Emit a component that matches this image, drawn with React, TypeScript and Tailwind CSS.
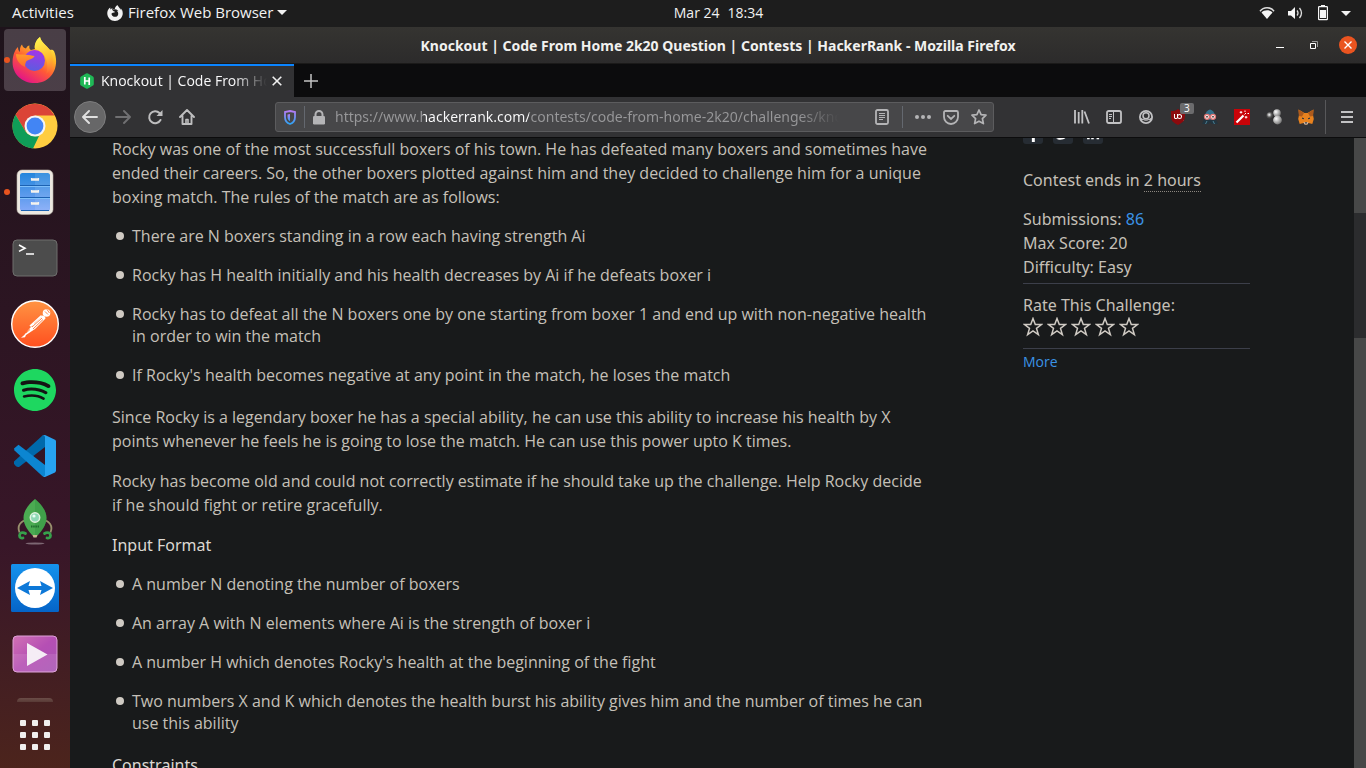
import type { ReactNode } from "react";
import { SiFirefoxbrowser, SiUblockorigin, SiSpotify } from "react-icons/si";
import { FaFacebookF, FaTwitter, FaLinkedinIn } from "react-icons/fa";

function FirefoxLogo() {
  return (
    <svg viewBox="0 0 46 46" className="size-[46px]" aria-hidden="true">
      <defs>
        <linearGradient id="ffBody" x1="0.8" y1="0.05" x2="0.25" y2="0.95">
          <stop offset="0" stopColor="#fff44f" />
          <stop offset="0.3" stopColor="#ffb625" />
          <stop offset="0.6" stopColor="#ff5a36" />
          <stop offset="1" stopColor="#e31587" />
        </linearGradient>
        <linearGradient id="ffGlobe" x1="0.6" y1="0" x2="0.4" y2="1">
          <stop offset="0" stopColor="#a435e8" />
          <stop offset="1" stopColor="#5c5ce0" />
        </linearGradient>
        <linearGradient id="ffTail" x1="0.4" y1="0" x2="0.6" y2="1">
          <stop offset="0" stopColor="#fff44f" />
          <stop offset="0.6" stopColor="#ffbd2e" />
          <stop offset="1" stopColor="#ff7139" stopOpacity="0.4" />
        </linearGradient>
        <linearGradient id="ffFace" x1="0" y1="0" x2="0" y2="1">
          <stop offset="0" stopColor="#ff9a2a" />
          <stop offset="1" stopColor="#ff6a2e" />
        </linearGradient>
      </defs>
      <path fill="url(#ffBody)" d="M8 15C7.500 12 8.500 9 10 7.500C10.500 10 12 11 14 11.500C15 9.500 16 8.700 17.500 8.500C17 10.500 17.500 12 19 13L23 12C22 8 24 3 28 0C29 5 34 8 38 13C40 12.500 41 13 42 14C48 28 41 46 23 46C9 46 0 36 .6 24C.8 19 2.500 13 6 10C6 12 6.500 14 8 15Z" />
      <path fill="url(#ffTail)" d="M28 0C29 5 34 8 38 13C42 20 42 32 34 37C37 30 35 20 30 16C27 13 23 12 23 12C22 8 24 3 28 0Z" />
      <circle cx="22.500" cy="23.500" r="10.500" fill="url(#ffGlobe)" />
      <path fill="url(#ffFace)" d="M4 17C9 17.500 18 18 22.500 19C21.500 22 17 22.500 14.500 24C13 26 13 29 13 30C8 28 4 23 4 17Z" />
    </svg>
  );
}

function ChromeLogo() {
  return (
    <svg viewBox="0 0 46 46" className="size-[46px]" aria-hidden="true">
      <circle cx="23" cy="23" r="22.500" fill="#ffcd40" />
      <path fill="#db4437" d="M3.500 11.750A22.500 22.500 0 0 1 42.500 12.500H23L13.500 28.500Z" />
      <path fill="#0f9d58" d="M3.500 11.750L13.500 28.500C16 32 20 34 27 33L21 45.500A22.500 22.500 0 0 1 3.500 11.750Z" />
      <circle cx="23" cy="23" r="10.500" fill="#f4f4f4" />
      <circle cx="23" cy="23" r="8.400" fill="#4285f4" />
    </svg>
  );
}

function FilesLogo() {
  return (
    <svg viewBox="0 0 38 46" className="h-[46px] w-[38px]" aria-hidden="true">
      <defs>
        <linearGradient id="drawer" x1="0" y1="0" x2="0" y2="1">
          <stop offset="0" stopColor="#2486dc" />
          <stop offset="1" stopColor="#83a9f8" />
        </linearGradient>
      </defs>
      <rect x="1" y="1" width="36" height="44.500" rx="5" fill="#ece8e1" stroke="#b9b2a8" strokeWidth=".6" />
      <rect x="4" y="4" width="30" height="38" rx="2.500" fill="url(#drawer)" />
      <path fill="#fff" fillOpacity=".1" d="M19 4h12.500a2.500 2.500 0 0 1 2.500 2.500v33a2.500 2.500 0 0 1-2.500 2.500H19z" />
      <path stroke="#1c62b2" d="M4 16.500h30M4 28.500h30M5 41.500h28" />
      <path stroke="#7fc0fb" d="M4 17.500h30M4 29.500h30" />
      <path stroke="#f6f3ee" strokeWidth="2.600" d="M15 10.500h8M15 22.500h8M15 34.500h8" />
      <path stroke="#f6f3ee" strokeWidth="1.200" d="M15.500 9v2M22.500 9v2M15.500 21v2M22.500 21v2M15.500 33v2M22.500 33v2" />
    </svg>
  );
}

function TerminalLogo() {
  return (
    <svg viewBox="0 0 46 38" className="h-[38px] w-[46px]" aria-hidden="true">
      <rect x="1" y="1" width="44" height="36" rx="4" fill="#4c4c4c" stroke="#6e6e6c" />
      <path fill="none" stroke="#fff" strokeWidth="1.600" d="M7 6l6 3.200L7 12.400M14 15h8" />
    </svg>
  );
}

function PostmanLogo() {
  return (
    <svg viewBox="0 0 48 48" className="size-[48px]" aria-hidden="true">
      <defs>
        <linearGradient id="pm" x1="0" y1="0" x2="0" y2="1">
          <stop offset="0" stopColor="#ff9443" />
          <stop offset="1" stopColor="#ff4f1f" />
        </linearGradient>
      </defs>
      <circle cx="24" cy="24" r="23.300" fill="url(#pm)" stroke="#fff" strokeWidth="1.400" />
      <circle cx="35.500" cy="13" r="3.800" fill="#fff" />
      <path stroke="#ff7a38" strokeWidth=".9" fill="none" d="M34 11.500l3 3M36 9.500l2.500 3.500" />
      <path fill="#fff" d="M31 15.500c2 0 3.500 1 3.500 3L24 29l-9 6-1 2.200-4 .6 3-2.600L19 28z" />
      <path stroke="#fff" strokeWidth="1.500" strokeLinecap="round" fill="none" d="M30 16l-11 10 4-2" />
      <path stroke="#ff7332" strokeWidth=".9" d="M21 27l10-9M22 29l10-9.500M15 33l4-3.500" />
    </svg>
  );
}

function VsCodeLogo() {
  return (
    <svg viewBox="0 0 42 42" className="size-[42px]" aria-hidden="true">
      <path fill="#0069ab" d="M0 28.500v-2L28.500.5 31 0v12L5 32c-2 .5-4-1-5-3.500z" />
      <path fill="#0c86d1" d="M0 13.500l4.500-3.700L31 30v12l-2.500-.8L.5 15.500z" />
      <path fill="#27a3f1" d="M31 0l10 4.800c.6.300 1 1 1 1.800v29c0 .8-.4 1.500-1 1.800L31 42c-1 .2-2-.4-2.500-.8 1 .5 2.500 0 2.500-1.400V2.200C31 1 29.500 0 28.500.5z" />
    </svg>
  );
}

function RocketLogo() {
  return (
    <svg viewBox="0 0 38 46" className="h-[46px] w-[38px]" aria-hidden="true">
      <path fill="none" stroke="#98906d" strokeWidth="1.800" d="M8 21.500c-5.500 3-6.500 7-4.500 12M30 21.500c5.500 3 6.500 7 4.500 12" />
      <ellipse cx="19" cy="44.500" rx="9.500" ry=".9" fill="#fff" fillOpacity=".35" />
      <path fill="#c7b98f" d="M15.500 34h7l-2 4.500h-3z" />
      <path fill="#4bab52" d="M19 0c5 4 11.500 11 11.500 19 0 7.500-5.500 13.500-8.500 17h-6c-3-3.500-8.500-9.500-8.500-17C7.500 11 14 4 19 0z" />
      <path fill="#2f8d3d" fillOpacity=".35" d="M19 0c5 4 11.500 11 11.500 19 0 7.500-5.500 13.500-8.500 17h-3z" />
      <circle cx="19" cy="18.500" r="4.700" fill="#8ed9b5" stroke="#e0f2df" strokeWidth="1.500" />
      <circle cx="18" cy="17" r="1.600" fill="#e8fff4" />
      <path stroke="#1f6b2d" strokeWidth="2" strokeDasharray="1.500 .7" d="M15 27.500h8" />
      <path fill="none" stroke="#36a04b" strokeWidth="2.800" strokeLinecap="round" d="M9.500 34.500c-3-2-6-.5-6 2 0 2 1.500 3 3.500 2.500M28.500 34.500c3-2 6-.5 6 2 0 2-1.500 3-3.500 2.500" />
    </svg>
  );
}

function TeamViewerLogo() {
  return (
    <svg viewBox="0 0 48 48" className="size-[48px]" aria-hidden="true">
      <defs>
        <linearGradient id="tv" x1="0" y1="0" x2="0" y2="1">
          <stop offset="0" stopColor="#1592ec" />
          <stop offset="1" stopColor="#0564c8" />
        </linearGradient>
      </defs>
      <rect width="48" height="48" rx="1.500" fill="url(#tv)" />
      <circle cx="24" cy="24" r="20" fill="#fff" />
      <path fill="#0d78d8" d="M6 24l13-7-1.500 5h13L29 17l13 7-13 7 1.500-5h-13l1.500 5z" />
    </svg>
  );
}

function VideosLogo() {
  return (
    <svg viewBox="0 0 46 38" className="h-[38px] w-[46px]" aria-hidden="true">
      <defs>
        <linearGradient id="vid" x1="0" y1="0" x2="1" y2="1">
          <stop offset="0" stopColor="#d272b4" />
          <stop offset=".5" stopColor="#b54fb4" />
          <stop offset="1" stopColor="#a855b4" />
        </linearGradient>
      </defs>
      <rect x="1" y="1" width="44" height="36" rx="4" fill="url(#vid)" stroke="#dda0d6" />
      <path fill="#fff" fillOpacity=".1" d="M1 19h44v14a4 4 0 0 1-4 4H5a4 4 0 0 1-4-4z" />
      <path fill="#f5edf5" d="M15 8l20.500 11.500L15 31z" />
    </svg>
  );
}

const dockItems: { name: string; icon: ReactNode; running?: boolean; active?: boolean }[] = [
  { name: "Firefox", icon: <FirefoxLogo />, running: true, active: true },
  { name: "Chrome", icon: <ChromeLogo /> },
  { name: "Files", icon: <FilesLogo />, running: true },
  { name: "Terminal", icon: <TerminalLogo /> },
  { name: "Postman", icon: <PostmanLogo /> },
  {
    name: "Spotify",
    icon: (
      <span className="grid size-[42px] place-items-center rounded-full bg-[#141414]">
        <SiSpotify className="size-[42px] text-[#1ed760]" />
      </span>
    ),
  },
  { name: "Visual Studio Code", icon: <VsCodeLogo /> },
  { name: "Rocket", icon: <RocketLogo /> },
  { name: "TeamViewer", icon: <TeamViewerLogo /> },
  { name: "Videos", icon: <VideosLogo /> },
];

function TopBar() {
  return (
    <header className="grid h-[27px] shrink-0 grid-cols-[1fr_auto_1fr] items-center bg-[#1d1d1d] pb-px text-sm text-[#f2f2f2]">
      <div className="flex items-center pl-3 text-[15px]">
        <button className="w-[95px] text-left">Activities</button>
        <button className="flex items-center whitespace-nowrap">
          <SiFirefoxbrowser className="mr-[5px] size-4" aria-hidden="true" />
          Firefox Web Browser
          <svg viewBox="0 0 10 5" className="ml-1 h-[5px] w-[10px]" aria-hidden="true">
            <path fill="currentColor" d="M0 0h10L5 5z" />
          </svg>
        </button>
      </div>
      <button className="flex gap-2 pl-[71px]">
        <span>Mar 24</span>
        <span>18:34</span>
      </button>
      <button aria-label="System menu" className="flex items-center justify-end pr-[15px]">
        <svg viewBox="0 0 16 14" className="h-[14px] w-4" aria-hidden="true">
          <path fill="none" stroke="#ddd" strokeWidth="1.500" d="M1 5.200C4.500.5 11.500.5 15 5.200" />
          <path fill="#f5f5f5" d="M2.500 6.500C5 3.500 11 3.500 13.500 6.500L8 13z" />
        </svg>
        <svg viewBox="0 0 16 14" className="ml-3 h-[14px] w-4" aria-hidden="true">
          <path fill="#f5f5f5" d="M1 5h3l4-4v12L4 9.500H1z" />
          <path fill="none" stroke="#ddd" strokeWidth="1.300" d="M10 4.500q2 2.500 0 5M12.500 2q4 5 0 10" />
        </svg>
        <svg viewBox="0 0 10 16" className="ml-[15px] h-4 w-[10px]" aria-hidden="true">
          <path fill="#f5f5f5" d="M3 0h4v2H3zM2 5h6v8H2z" />
          <rect x=".6" y="1.600" width="8.800" height="13" rx=".6" fill="none" stroke="#f5f5f5" strokeWidth="1.200" />
        </svg>
        <svg viewBox="0 0 10 5" className="ml-[13px] h-[5px] w-[10px]" aria-hidden="true">
          <path fill="currentColor" d="M0 0h10L5 5z" />
        </svg>
      </button>
    </header>
  );
}

function Dock() {
  return (
    <nav
      aria-label="Dock"
      className="flex w-[70px] shrink-0 flex-col items-center bg-linear-to-b from-[#1e131b] via-[#381628] via-70% to-[#4c241c]"
    >
      {dockItems.map((item) => (
        <div key={item.name} className="relative flex h-[66px] w-full shrink-0 items-center justify-center">
          {item.running && <span className="absolute top-[30px] left-1 size-[6px] rounded-full bg-[#e9541f]" />}
          <button
            aria-label={item.name}
            className={
              item.active
                ? "grid size-[62px] place-items-center rounded-[4px] bg-[#f6edf6]/20"
                : "grid size-[62px] place-items-center"
            }
          >
            {item.icon}
          </button>
        </div>
      ))}
      <div className="mt-[11px] h-1 w-9 shrink-0 rounded-t-[5px] bg-linear-to-b from-[#6b4d48] to-[#593a36]" />
      <button aria-label="Show applications" className="mt-[18px] grid shrink-0 grid-cols-3 gap-[6px]">
        {Array.from({ length: 9 }, (_, i) => (
          <span key={i} className="size-[6px] rounded-[1px] bg-[#f1efee]" />
        ))}
      </button>
    </nav>
  );
}

function TitleBar() {
  return (
    <div className="grid h-[37px] shrink-0 grid-cols-[1fr_auto_1fr] items-center border-b border-[#1b1a19] bg-linear-to-b from-[#353431] to-[#2c2b2b]">
      <span />
      <h1 className="pt-[2px] font-['Noto_Sans',sans-serif] text-sm font-bold whitespace-nowrap text-[#f1f1ef]">
        Knockout | Code From Home 2k20 Question | Contests | HackerRank - Mozilla Firefox
      </h1>
      <div className="flex items-center justify-end pr-[9px]">
        <button aria-label="Minimize" className="flex h-4 w-8 items-center">
          <span className="mt-1 h-px w-2 bg-white" />
        </button>
        <button aria-label="Restore" className="flex w-[31px] justify-start pl-[2px]">
          <svg viewBox="0 0 8 8" className="size-2" aria-hidden="true">
            <path fill="none" stroke="#fff" d="M.5 2.500h5v5h-5z" />
            <path fill="none" stroke="#999" d="M2 .5h5.500V6" />
          </svg>
        </button>
        <button aria-label="Close" className="grid size-[18px] place-items-center rounded-full bg-[#ea5420]">
          <svg viewBox="0 0 8 8" className="size-2" aria-hidden="true">
            <path stroke="#fff" strokeWidth="1.400" d="M.5.500l7 7M7.500.500l-7 7" />
          </svg>
        </button>
      </div>
    </div>
  );
}

function TabStrip() {
  return (
    <div className="flex h-[33px] shrink-0 bg-[#0c0c0d]" role="tablist">
      <div className="flex w-[224px] items-center border-t-2 border-[#0a84ff] bg-[#323234] pb-px pl-[10px]" role="tab" aria-selected="true">
        <svg viewBox="0 0 14 16" className="h-4 w-[14px] shrink-0" aria-hidden="true">
          <path fill="#1fb856" d="M7 .300Q7.500.300 8 .600L13 3.500Q13.800 4 13.800 5v6q0 1-.8 1.500L8 15.400q-1 .6-2 0L1 12.500Q.2 12 .2 11V5q0-1 .8-1.500L6 .600Q6.500.300 7 .300z" />
          <path stroke="#fff" strokeWidth="1.700" d="M4.800 4v7.500M9.200 4.500V12M4.800 8h4.400" />
        </svg>
        <span className="ml-[7px] w-[166px] overflow-hidden mask-r-from-80% text-sm whitespace-nowrap text-[#f9f9fa]">
          Knockout | Code From Home
        </span>
        <button aria-label="Close tab" className="ml-[5px]">
          <svg viewBox="0 0 10 10" className="size-[10px]" aria-hidden="true">
            <path stroke="#f0f0f0" strokeWidth="1.600" d="M.7.700l8.600 8.600M9.300.700L.7 9.300" />
          </svg>
        </button>
      </div>
      <button aria-label="New tab" className="ml-[10px]">
        <svg viewBox="0 0 14 14" className="size-[14px]" aria-hidden="true">
          <path stroke="#c4c4c4" strokeWidth="1.500" d="M7 0v14M0 7h14" />
        </svg>
      </button>
    </div>
  );
}

function UrlBar() {
  return (
    <div className="ml-20 flex h-[30px] w-[719px] shrink items-center rounded-[3px] border border-[#5c5c5e] bg-[#474749] text-[#b4b4b6]">
      <button aria-label="Tracking protection" className="ml-2">
        <svg viewBox="0 0 12 15" className="h-[15px] w-3" aria-hidden="true">
          <defs>
            <linearGradient id="shield" x1="0" y1="0" x2="0" y2="1">
              <stop offset="0" stopColor="#b57cf5" />
              <stop offset="1" stopColor="#2fa3f5" />
            </linearGradient>
          </defs>
          <path fill="none" stroke="url(#shield)" strokeWidth="1.800" d="M6 1L11 2v5c0 3.500-2 6-5 7-3-1-5-3.500-5-7V2z" />
          <path fill="url(#shield)" d="M6 4v7.300C4.300 10.300 3.500 9 3.500 7V4.400z" />
        </svg>
      </button>
      <span className="ml-2 h-[22px] w-px bg-[#64686f]" />
      <button aria-label="Site information" className="ml-2">
        <svg viewBox="0 0 12 15" className="h-[15px] w-3" aria-hidden="true">
          <rect y="6" width="12" height="8.500" rx="1.200" fill="#b4b4b6" />
          <path fill="none" stroke="#b4b4b6" strokeWidth="2" d="M2.500 7V4.500a3.500 3.500 0 0 1 7 0V7" />
        </svg>
      </button>
      <input
        aria-label="Address"
        type="text"
        readOnly
        defaultValue="https://www.hackerrank.com/contests/code-from-home-2k20/challenges/knockout-7"
        className="ml-[10px] min-w-0 flex-1 bg-[linear-gradient(90deg,#98989a_88px,#fbfbfc_88px,#fbfbfc_194px,#98989a_194px)] bg-clip-text mask-r-from-92% font-['Noto_Sans',sans-serif] text-sm text-transparent outline-none"
      />
      <button aria-label="Reader view" className="ml-9">
        <svg viewBox="0 0 14 16" className="h-4 w-[14px]" fill="none" stroke="currentColor" aria-hidden="true">
          <rect x="1" y="1" width="12" height="14" rx="1.500" strokeWidth="1.800" />
          <path d="M4 4.500h6M4 6.500h6M4 8.500h6M4 10.500h4" />
        </svg>
      </button>
      <span className="ml-[13px] h-[22px] w-px bg-[#64686f]" />
      <button aria-label="Page actions" className="ml-3 flex gap-[2px]">
        <span className="size-1 rounded-full bg-current" />
        <span className="size-1 rounded-full bg-current" />
        <span className="size-1 rounded-full bg-current" />
      </button>
      <button aria-label="Save to Pocket" className="ml-3">
        <svg viewBox="0 0 16 15" className="h-[15px] w-4" fill="none" stroke="currentColor" strokeWidth="1.800" aria-hidden="true">
          <path d="M1 2.500Q1 1 2.500 1h11Q15 1 15 2.500V7a7 7 0 0 1-14 0z" />
          <path strokeLinecap="round" d="M4.700 5.800L8 8.900l3.300-3.100" />
        </svg>
      </button>
      <button aria-label="Bookmark this page" className="mr-[6px] ml-3">
        <svg viewBox="0 0 16 16" className="size-4" fill="none" stroke="currentColor" strokeWidth="1.700" strokeLinejoin="round" aria-hidden="true">
          <path d="M8 1l2.100 4.600 4.900.600-3.600 3.400 1 5L8 12.200l-4.400 2.400 1-5L1 6.200l4.900-.6z" />
        </svg>
      </button>
    </div>
  );
}

function Extensions() {
  return (
    <div className="ml-auto flex items-center gap-4 text-[#c2c2c4]">
      <button aria-label="Library">
        <svg viewBox="0 0 16 16" className="size-4" stroke="currentColor" strokeWidth="1.800" aria-hidden="true">
          <path d="M1 1v13.500M4.700 3v11.500M8.300 1v13.500M10.500 2.500l4.500 12" />
        </svg>
      </button>
      <button aria-label="Sidebars">
        <svg viewBox="0 0 16 14" className="h-[14px] w-4" fill="none" stroke="currentColor" aria-hidden="true">
          <rect x="1" y="1" width="14" height="12" rx="1.700" strokeWidth="1.800" />
          <path d="M7.500 1v12M3 4.500h3M3 6.500h3M3 8.500h2" />
        </svg>
      </button>
      <button aria-label="Account">
        <svg viewBox="0 0 16 16" className="size-4" aria-hidden="true">
          <circle cx="8" cy="8" r="6.100" fill="none" stroke="currentColor" strokeWidth="1.800" />
          <path fill="currentColor" d="M2.500 8.500C5 11 11 11 13.500 8.500L12.500 12.200Q8 15.500 3.500 12.200z" />
          <circle cx="8" cy="6.800" r="3" fill="#323234" stroke="currentColor" strokeWidth="1.500" />
          <path fill="none" stroke="#323234" strokeWidth="1.300" d="M4.500 11.200q3.500 2.600 7 0" />
        </svg>
      </button>
      <button aria-label="Ad blocker" className="relative size-4">
        <span className="grid size-4 place-items-center">
          <span className="col-start-1 row-start-1 h-[7px] w-[11px] bg-white" />
          <SiUblockorigin className="col-start-1 row-start-1 size-4 text-[#8c0a0d]" aria-hidden="true" />
        </span>
        <span className="absolute -top-[6px] left-[10px] rounded-[2px] bg-[#6b6b6d] px-1 text-[10px] leading-[11px] text-white">3</span>
      </button>
      <button aria-label="Incognito extension">
        <svg viewBox="0 0 16 16" className="size-4" aria-hidden="true">
          <path fill="#32708a" d="M3 7C3.500 3 5.500 1 8 .500c2.500.5 4.500 2.500 5 6.500L10 12H6z" />
          <path fill="#22343f" d="M2.500 9.500L8 11l5.500-1.500L16 15H9.500L8 13l-1.500 2H0z" />
          <path stroke="#4b8195" strokeWidth="1" d="M5 12l-1.500 3M11 12l1.500 3" />
          <g fill="#f8eeee" stroke="#de7472" strokeWidth="1.300">
            <circle cx="5" cy="7.800" r="2.500" />
            <circle cx="11" cy="7.800" r="2.500" />
          </g>
          <path fill="#222" d="M4.300 7.100h1.400v1.400H4.300zM10.300 7.100h1.400v1.400h-1.400z" />
        </svg>
      </button>
      <button aria-label="Magic wand extension">
        <svg viewBox="0 0 16 16" className="size-4" aria-hidden="true">
          <path fill="#c90308" d="M0 0h16v16H0z" />
          <path stroke="#fff" strokeWidth="2.200" d="M2.500 13.500l7-7" />
          <path stroke="#fff" d="M10.500 5.500l1.500-1.500M7 2v2.500M5.700 3.300h2.600M12 7v2.500M10.800 8.200h2.600M11 1.500v1.500M13.500 4.500H15" />
        </svg>
      </button>
      <button aria-label="Molecule extension">
        <svg viewBox="0 0 16 16" className="size-4" aria-hidden="true">
          <defs>
            <radialGradient id="ball" cx=".35" cy=".35" r=".7">
              <stop offset="0" stopColor="#fff" />
              <stop offset="1" stopColor="#707070" />
            </radialGradient>
            <radialGradient id="darkBall" cx=".4" cy=".4" r=".7">
              <stop offset="0" stopColor="#fff" />
              <stop offset=".5" stopColor="#555" />
              <stop offset="1" stopColor="#222" />
            </radialGradient>
          </defs>
          <circle cx="11" cy="4" r="3.800" fill="url(#ball)" />
          <circle cx="11.500" cy="11" r="4.400" fill="url(#ball)" />
          <circle cx="4" cy="6.500" r="3.600" fill="url(#darkBall)" />
        </svg>
      </button>
      <button aria-label="Wallet extension">
        <svg viewBox="0 0 16 16" className="size-4" aria-hidden="true">
          <path fill="#e8821e" d="M.5.500L6.500 4h3L15.500.500 15 6l.8 4-1.500 5-3.800-1L9 15.500H7L5.500 14l-3.800 1L.2 10 1 6z" />
          <path fill="#ad5a1c" d="M.5.500L6 4 4 7.500.9 7zM15.500.500L10 4l2 3.500 3.100-.5z" />
          <path fill="#2b3440" d="M4 8.500l2 .8v1l-2-.6zM12 8.500l-2 .8v1l2-.6z" />
          <path fill="#d5c4b6" d="M5.500 13l1 2.500h3l1-2.500-1 .2H6.500z" />
          <path fill="#2b3440" d="M6.900 13.300h2.200v1.200H6.900z" />
        </svg>
      </button>
      <div className="-mr-px -ml-[5px] h-[34px] w-px bg-[#58585a]" />
      <button aria-label="Open menu" className="mr-[13px] flex h-3 w-3 flex-col justify-between">
        <span className="h-[2px] w-full bg-current" />
        <span className="h-[2px] w-full bg-current" />
        <span className="h-[2px] w-full bg-current" />
      </button>
    </div>
  );
}

function NavBar() {
  return (
    <div className="flex h-[41px] shrink-0 items-center border-b border-[#0c0c0d] bg-[#323234] pl-1 text-[#bebebf]">
      <button aria-label="Back" className="grid size-8 shrink-0 place-items-center rounded-full border border-[#7d7d7e] bg-[#676768] text-[#e0e0e0]">
        <svg viewBox="0 0 16 14" className="h-[14px] w-4" fill="none" stroke="currentColor" strokeWidth="1.900" strokeLinecap="round" strokeLinejoin="round" aria-hidden="true">
          <path d="M7 1L1 7l6 6M1.500 7H15" />
        </svg>
      </button>
      <button aria-label="Forward" className="ml-[9px] text-[#707072]">
        <svg viewBox="0 0 16 14" className="h-[14px] w-4" fill="none" stroke="currentColor" strokeWidth="1.900" strokeLinecap="round" strokeLinejoin="round" aria-hidden="true">
          <path d="M9 1l6 6-6 6M14.500 7H1" />
        </svg>
      </button>
      <button aria-label="Reload" className="ml-4">
        <svg viewBox="0 0 16 16" className="size-4" aria-hidden="true">
          <path fill="none" stroke="currentColor" strokeWidth="2" strokeLinecap="round" d="M13.500 11A6 6 0 1 1 12.500 4" />
          <path fill="currentColor" d="M15.500 1v6h-6z" />
        </svg>
      </button>
      <button aria-label="Home" className="ml-4">
        <svg viewBox="0 0 16 16" className="size-4" fill="none" stroke="currentColor" strokeWidth="1.900" strokeLinecap="round" strokeLinejoin="round" aria-hidden="true">
          <path d="M1 8l7-7 7 7M3.500 7v8h9V7" />
          <path d="M7 14.500v-4h2v4" strokeWidth="1.600" />
        </svg>
      </button>
      <UrlBar />
      <Extensions />
    </div>
  );
}

function BulletList({ items }: { items: string[] }) {
  return (
    <ul className="mt-4 mb-[19px] flex flex-col gap-[17px] leading-[22px]">
      {items.map((text) => (
        <li key={text} className="flex">
          <span className="mt-[7px] mr-2 ml-1 size-2 shrink-0 rounded-full bg-[#cfcac3]" />
          {text}
        </li>
      ))}
    </ul>
  );
}

const rules = [
  "There are N boxers standing in a row each having strength Ai",
  "Rocky has H health initially and his health decreases by Ai if he defeats boxer i",
  "Rocky has to defeat all the N boxers one by one starting from boxer 1 and end up with non-negative health in order to win the match",
  "If Rocky's health becomes negative at any point in the match, he loses the match",
];

const inputFormat = [
  "A number N denoting the number of boxers",
  "An array A with N elements where Ai is the strength of boxer i",
  "A number H which denotes Rocky's health at the beginning of the fight",
  "Two numbers X and K which denotes the health burst his ability gives him and the number of times he can use this ability",
];

function Star() {
  return (
    <svg viewBox="0 0 20 20" className="size-5" fill="none" stroke="#cfcac3" strokeWidth="1.500" aria-hidden="true">
      <path d="M10 1.500l2.300 6h6.200l-5 3.900 1.900 6.300L10 14l-5.400 3.700 1.900-6.300-5-3.900h6.200z" />
    </svg>
  );
}

function Sidebar() {
  return (
    <aside className="-mt-[14px] w-[227px] shrink-0 font-['Noto_Sans',sans-serif]">
      <div className="flex gap-[10px] text-white">
        <a href="#facebook" aria-label="Facebook" className="grid size-5 place-items-center rounded-[3px] bg-[#262c33]">
          <FaFacebookF className="size-[15px]" />
        </a>
        <a href="#twitter" aria-label="Twitter" className="grid size-5 place-items-center rounded-[3px] bg-[#262c33]">
          <FaTwitter className="size-[14px]" />
        </a>
        <a href="#linkedin" aria-label="LinkedIn" className="grid size-5 place-items-center rounded-[3px] bg-[#262c33]">
          <FaLinkedinIn className="size-[14px]" />
        </a>
      </div>
      <p className="mt-6">
        Contest ends in <span className="border-b border-dotted border-[#8c8780]">2 hours</span>
      </p>
      <div className="mt-[15px] border-b border-[#3c3f4a] pb-1">
        <p>
          Submissions: <a href="#submissions" className="text-[#3b93e6]">86</a>
        </p>
        <p>Max Score: 20</p>
        <p>Difficulty: Easy</p>
      </div>
      <div className="border-b border-[#3c3f4a] pt-[9px] pb-[11px]">
        <p>Rate This Challenge:</p>
        <div className="flex gap-1">
          {[1, 2, 3, 4, 5].map((n) => (
            <button key={n} aria-label={`Rate ${n} of 5`}>
              <Star />
            </button>
          ))}
        </div>
      </div>
      <a href="#more" className="mt-[2px] block font-['Open_Sans',sans-serif] text-sm leading-[22px] text-[#3b93e6]">
        More
      </a>
    </aside>
  );
}

function Page() {
  return (
    <div className="flex min-h-0 flex-1 bg-[#181a1b] text-base leading-6 text-[#c5c0b8]">
      <div className="flex min-w-0 flex-1 items-start gap-[93px] overflow-hidden pr-[104px] pl-[42px]">
        <article className="-mt-px min-w-0 flex-1">
          <p>
            Rocky was one of the most successfull boxers of his town. He has defeated many boxers and sometimes have
            ended their careers. So, the other boxers plotted against him and they decided to challenge him for a unique
            boxing match. The rules of the match are as follows:
          </p>
          <BulletList items={rules} />
          <p>
            Since Rocky is a legendary boxer he has a special ability, he can use this ability to increase his health by
            X points whenever he feels he is going to lose the match. He can use this power upto K times.
          </p>
          <p className="mt-4">
            Rocky has become old and could not correctly estimate if he should take up the challenge. Help Rocky decide
            if he should fight or retire gracefully.
          </p>
          <h2 className="mt-4 font-['Noto_Sans',sans-serif] text-[#dcd8d2]">Input Format</h2>
          <BulletList items={inputFormat} />
          <h2 className="font-['Noto_Sans',sans-serif] text-[#dcd8d2]">Constraints</h2>
        </article>
        <Sidebar />
      </div>
      <div className="flex w-3 shrink-0 flex-col bg-[#474848]" aria-hidden="true">
        <div className="mt-[75px] h-[125px] bg-[#2b2c2e]" />
      </div>
    </div>
  );
}

export default function App() {
  return (
    <div className="flex h-screen flex-col overflow-hidden bg-[#181a1b] font-['Open_Sans','Noto_Sans',sans-serif]">
      <TopBar />
      <div className="flex min-h-0 flex-1">
        <Dock />
        <main className="flex min-w-0 flex-1 flex-col">
          <TitleBar />
          <TabStrip />
          <NavBar />
          <Page />
        </main>
      </div>
    </div>
  );
}
